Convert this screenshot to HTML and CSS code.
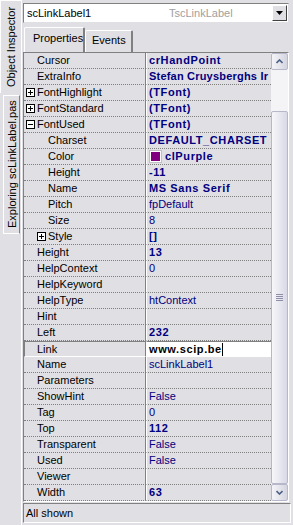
FILE: index.html
```html
<!DOCTYPE html>
<html lang="en">
<head>
    <meta charset="UTF-8">
    <meta name="viewport" content="width=device-width, initial-scale=1.0">
    <title>Object Inspector</title>
    <link rel="stylesheet" href="styles.css">
</head>
<body>
    <div class="window">
        <div class="side-tabs">
            <div class="side-tab active"><span>Object Inspector</span></div>
            <div class="side-tab"><span>Exploring scLinkLabel.pas</span></div>
        </div>
        <div class="main">
            <div class="combo">
                <span class="combo-name">scLinkLabel1</span>
                <span class="combo-type">TscLinkLabel</span>
                <span class="combo-btn">
                    <svg width="7" height="4" viewBox="0 0 7 4"><path d="M0 0h7L3.5 4z" fill="#000"/></svg>
                </span>
            </div>
            <div class="tabs">
                <div class="tab active">Properties</div>
                <div class="tab">Events</div>
            </div>
            <div class="grid">
                <div class="rows">
                    <div class="row"><div class="name">Cursor</div><div class="value bold">crHandPoint</div></div>
                    <div class="row"><div class="name">ExtraInfo</div><div class="value bold tight">Stefan Cruysberghs Ir</div></div>
                    <div class="row"><div class="name"><i class="box plus"></i>FontHighlight</div><div class="value bold">(TFont)</div></div>
                    <div class="row"><div class="name"><i class="box plus"></i>FontStandard</div><div class="value bold">(TFont)</div></div>
                    <div class="row"><div class="name"><i class="box minus"></i>FontUsed</div><div class="value bold">(TFont)</div></div>
                    <div class="row"><div class="name sub">Charset</div><div class="value bold">DEFAULT_CHARSET</div></div>
                    <div class="row"><div class="name sub">Color</div><div class="value bold"><i class="swatch"></i>clPurple</div></div>
                    <div class="row"><div class="name sub">Height</div><div class="value bold">-11</div></div>
                    <div class="row"><div class="name sub">Name</div><div class="value bold">MS Sans Serif</div></div>
                    <div class="row"><div class="name sub">Pitch</div><div class="value">fpDefault</div></div>
                    <div class="row"><div class="name sub">Size</div><div class="value">8</div></div>
                    <div class="row"><div class="name sub"><i class="box plus"></i>Style</div><div class="value bold">[]</div></div>
                    <div class="row"><div class="name">Height</div><div class="value bold">13</div></div>
                    <div class="row"><div class="name">HelpContext</div><div class="value">0</div></div>
                    <div class="row"><div class="name">HelpKeyword</div><div class="value"></div></div>
                    <div class="row"><div class="name">HelpType</div><div class="value">htContext</div></div>
                    <div class="row"><div class="name">Hint</div><div class="value"></div></div>
                    <div class="row"><div class="name">Left</div><div class="value bold">232</div></div>
                    <div class="row selected"><div class="name">Link</div><div class="value bold">www.scip.be<span class="caret"></span></div></div>
                    <div class="row"><div class="name">Name</div><div class="value">scLinkLabel1</div></div>
                    <div class="row"><div class="name">Parameters</div><div class="value"></div></div>
                    <div class="row"><div class="name">ShowHint</div><div class="value">False</div></div>
                    <div class="row"><div class="name">Tag</div><div class="value">0</div></div>
                    <div class="row"><div class="name">Top</div><div class="value bold">112</div></div>
                    <div class="row"><div class="name">Transparent</div><div class="value">False</div></div>
                    <div class="row"><div class="name">Used</div><div class="value">False</div></div>
                    <div class="row"><div class="name">Viewer</div><div class="value"></div></div>
                    <div class="row"><div class="name">Width</div><div class="value bold">63</div></div>
                </div>
                <div class="scrollbar">
                    <div class="sb-btn">
                        <svg width="7" height="5" viewBox="0 0 7 5"><path d="M0.5 4L3.5 1L6.5 4" fill="none" stroke="#4d6185" stroke-width="1.6"/></svg>
                    </div>
                    <div class="sb-track"></div>
                    <div class="sb-thumb"><span class="grip"></span></div>
                    <div class="sb-btn">
                        <svg width="7" height="5" viewBox="0 0 7 5"><path d="M0.5 1L3.5 4L6.5 1" fill="none" stroke="#4d6185" stroke-width="1.6"/></svg>
                    </div>
                </div>
            </div>
            <div class="status"><span>All shown</span></div>
        </div>
    </div>
</body>
</html>
```

FILE: styles.css
```css
body {
    margin: 0;
    background-color: #e0dfe3;
    font-family: "Liberation Sans", Arial, sans-serif;
    font-size: 11px;
    color: #000;
}
.window {
    display: flex;
    width: 293px;
    height: 525px;
    overflow: hidden;
}
.side-tabs {
    width: 21px;
    border-right: 1px solid #ffffff;
    display: flex;
    flex-direction: column;
}
.side-tab {
    writing-mode: vertical-rl;
    transform: rotate(180deg);
    display: flex;
    align-items: center;
    justify-content: center;
    box-sizing: border-box;
    margin-left: 3px;
    width: 17px;
    border-right: 1px solid #ffffff;
    border-top: 1px solid #ffffff;
    border-bottom: 1px solid #ffffff;
    border-left: 1px solid #808080;
    height: 139px;
    margin-top: 2px;
}
.side-tab.active {
    margin-left: 0;
    width: 21px;
    height: 93px;
    margin-top: 0;
    border-left: none;
    border-top: none;
}
.side-tab span {
    white-space: nowrap;
}
.main {
    flex: 1;
    padding-left: 1px;
    display: flex;
    flex-direction: column;
}
.combo {
    margin-top: 3px;
    width: 266px;
    height: 20px;
    box-sizing: border-box;
    background-color: #ffffff;
    border: 1px solid #808080;
    border-right-color: #e0dfe3;
    border-bottom-color: #e0dfe3;
    display: flex;
    align-items: center;
}
.combo-name {
    padding-left: 3px;
    width: 140px;
}
.combo-type {
    color: #a0a0a0;
    padding-left: 2px;
}
.combo-btn {
    margin-left: auto;
    width: 15px;
    height: 16px;
    margin-right: 1px;
    box-sizing: border-box;
    border: 1px solid #ffffff;
    border-right-color: #404040;
    border-bottom-color: #404040;
    background-color: #e0dfe3;
    display: flex;
    align-items: center;
    justify-content: center;
}
.tabs {
    display: flex;
    align-items: flex-end;
    height: 25px;
    margin-top: 4px;
    padding-left: 1px;
}
.tab {
    box-sizing: border-box;
    height: 22px;
    padding: 3px 5px 0 6px;
    border: 1px solid #ffffff;
    border-bottom: none;
    border-right: 2px solid #808080;
    border-radius: 2px 2px 0 0;
}
.tab.active {
    height: 25px;
    padding: 4px 6px 0 8px;
    width: 61px;
}
.grid {
    display: flex;
    width: 266px;
    height: 450px;
    box-sizing: border-box;
    border: 1px solid #808080;
    border-right-color: #ffffff;
    border-bottom-color: #ffffff;
}
.rows {
    width: 248px;
    overflow: hidden;
}
.row {
    display: flex;
    height: 16px;
}
.name {
    width: 122px;
    box-sizing: border-box;
    padding-left: 13px;
    border-bottom: 1px dotted #808080;
    border-right: 1px solid #808080;
    line-height: 15px;
    white-space: nowrap;
    display: flex;
    align-items: center;
}
.name.sub {
    padding-left: 24px;
}
.value {
    flex: 1;
    box-sizing: border-box;
    padding-left: 2px;
    border-left: 1px solid #ffffff;
    border-bottom: 1px dotted #808080;
    color: #000080;
    line-height: 15px;
    white-space: nowrap;
    overflow: hidden;
    display: flex;
    align-items: center;
}
.bold {
    font-weight: bold;
    letter-spacing: 0.6px;
}
.bold.tight {
    letter-spacing: 0.2px;
}
.box {
    width: 9px;
    height: 9px;
    box-sizing: border-box;
    border: 1px solid #000;
    background-color: #fff;
    margin-left: -11px;
    margin-right: 2px;
    position: relative;
}
.box::before {
    content: "";
    position: absolute;
    left: 1px;
    top: 3px;
    width: 5px;
    height: 1px;
    background-color: #000;
}
.box.plus::after {
    content: "";
    position: absolute;
    left: 3px;
    top: 1px;
    width: 1px;
    height: 5px;
    background-color: #000;
}
.swatch {
    width: 11px;
    height: 11px;
    box-sizing: border-box;
    background-color: #800080;
    border: 1px solid #ffffff;
    outline: 1px solid #c0c0c0;
    margin: 0 4px 0 1px;
}
.row.selected .name {
    border-top: 1px solid #808080;
    border-left: 1px solid #808080;
    border-bottom: 1px solid #ffffff;
    padding-left: 12px;
}
.row.selected .value {
    background-color: #ffffff;
    color: #000;
    border-top: 1px solid #808080;
    border-bottom: 1px solid #ffffff;
}
.caret {
    width: 1px;
    height: 13px;
    background-color: #000;
}
.scrollbar {
    width: 17px;
    display: flex;
    flex-direction: column;
    background-color: #f4f4f6;
}
.sb-btn {
    height: 17px;
    box-sizing: border-box;
    border: 1px solid #b6b7c9;
    border-radius: 2px;
    background: linear-gradient(to right, #f4f4f8, #d5d5e1);
    display: flex;
    align-items: center;
    justify-content: center;
}
.sb-track {
    height: 41px;
}
.sb-thumb {
    flex: 1;
    box-sizing: border-box;
    border: 1px solid #b6b7c9;
    border-radius: 2px;
    background: linear-gradient(to right, #f7f7fa, #d8d9e6);
    display: flex;
    align-items: center;
    justify-content: center;
}
.grip {
    width: 7px;
    height: 7px;
    background: repeating-linear-gradient(to bottom, #8e8fa6 0 1px, transparent 1px 2px);
}
.status {
    margin-top: 1px;
    width: 268px;
    height: 20px;
    box-sizing: border-box;
    border: 1px solid #808080;
    border-right-color: #ffffff;
    border-bottom-color: #ffffff;
    padding-left: 2px;
    line-height: 18px;
}
```
